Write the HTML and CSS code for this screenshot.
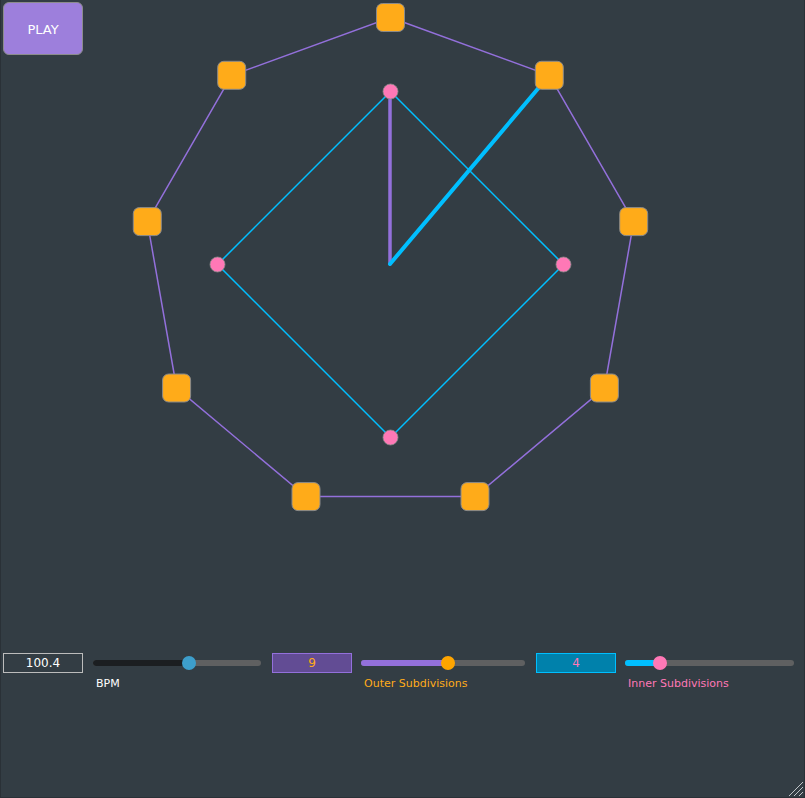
FILE: index.html
```html
<!DOCTYPE html>
<html>
<head>
<meta charset="utf-8">
<link rel="stylesheet" href="styles.css">
</head>
<body>
<div class="app">
  <div class="stage">
    <svg class="canvas" width="805" height="640" viewBox="0 0 805 640">
      <polygon class="outer" points="390.5,17.5 549.3,75.3 633.7,221.6 604.4,388 475,496.6 306,496.6 176.6,388 147.3,221.6 231.7,75.3"/>
      <polygon class="inner" points="390.5,91.5 563.5,264.5 390.5,437.5 217.5,264.5"/>
      <line class="hand-purple" x1="390" y1="264" x2="390" y2="91.5"/>
      <line class="hand-cyan" x1="390" y1="264" x2="549.3" y2="75.3"/>
      <g class="nodes">
        <rect x="376.5" y="3.5" width="28" height="28" rx="6"/>
        <rect x="535.3" y="61.3" width="28" height="28" rx="6"/>
        <rect x="619.7" y="207.6" width="28" height="28" rx="6"/>
        <rect x="590.4" y="374" width="28" height="28" rx="6"/>
        <rect x="461" y="482.6" width="28" height="28" rx="6"/>
        <rect x="292" y="482.6" width="28" height="28" rx="6"/>
        <rect x="162.6" y="374" width="28" height="28" rx="6"/>
        <rect x="133.3" y="207.6" width="28" height="28" rx="6"/>
        <rect x="217.7" y="61.3" width="28" height="28" rx="6"/>
      </g>
      <g class="dots">
        <circle cx="390.5" cy="91.5" r="7.5"/>
        <circle cx="563.5" cy="264.5" r="7.5"/>
        <circle cx="390.5" cy="437.5" r="7.5"/>
        <circle cx="217.5" cy="264.5" r="7.5"/>
      </g>
    </svg>
    <button class="play">PLAY</button>
  </div>
  <div class="controls">
    <div class="group g1">
      <div class="numbox bpm">100.4</div>
      <div class="slider">
        <div class="track"><div class="fill fill-bpm" style="width:57%"></div><div class="thumb thumb-bpm" style="left:57%"></div></div>
      </div>
      <div class="label label-bpm">BPM</div>
    </div>
    <div class="group g2">
      <div class="numbox outerbox">9</div>
      <div class="slider">
        <div class="track"><div class="fill fill-outer" style="width:53%"></div><div class="thumb thumb-outer" style="left:53%"></div></div>
      </div>
      <div class="label label-outer">Outer Subdivisions</div>
    </div>
    <div class="group g3">
      <div class="numbox innerbox">4</div>
      <div class="slider">
        <div class="track"><div class="fill fill-inner" style="width:21%"></div><div class="thumb thumb-inner" style="left:21%"></div></div>
      </div>
      <div class="label label-inner">Inner Subdivisions</div>
    </div>
  </div>
  <svg class="grip" width="18" height="18" viewBox="0 0 18 18">
    <line x1="17" y1="3" x2="3" y2="17"/>
    <line x1="17" y1="8" x2="8" y2="17"/>
    <line x1="17" y1="13" x2="13" y2="17"/>
  </svg>
</div>
</body>
</html>
```

FILE: styles.css
```css
html, body {
  margin: 0;
  padding: 0;
  background: #323c43;
}
.app {
  position: relative;
  width: 805px;
  height: 798px;
  box-sizing: border-box;
  border-left: 1px solid #2a3137;
  border-right: 1px solid #2a3137;
  border-bottom: 1px solid #2a3137;
  background: #333d44;
  font-family: "DejaVu Sans", Verdana, sans-serif;
  overflow: hidden;
}
.stage {
  position: relative;
  height: 640px;
  margin-left: -1px;
}
.canvas {
  display: block;
}
.outer {
  fill: none;
  stroke: #9370db;
  stroke-width: 1.5;
}
.inner {
  fill: none;
  stroke: #00bfff;
  stroke-width: 1.5;
}
.hand-purple {
  stroke: #9370db;
  stroke-width: 3.5;
  stroke-linecap: round;
}
.hand-cyan {
  stroke: #00bfff;
  stroke-width: 4;
  stroke-linecap: round;
}
.nodes rect {
  fill: #ffab19;
  stroke: #8a8a8a;
  stroke-width: 1;
}
.dots circle {
  fill: #ff78b6;
  stroke: #8a8a8a;
  stroke-width: 0.8;
}
.play {
  position: absolute;
  left: 3px;
  top: 2px;
  width: 80px;
  height: 53px;
  border: 1px solid #8c8c8c;
  border-radius: 6px;
  background: #9d7fdc;
  color: #ffffff;
  font-family: "DejaVu Sans", Verdana, sans-serif;
  font-size: 13px;
  padding: 2px 0 0 0;
}
.controls {
  display: flex;
  gap: 11px;
  padding: 13px 0 0 2px;
}
.group {
  display: grid;
  grid-template-columns: 80px auto;
  grid-template-rows: 20px auto;
  column-gap: 9px;
}
.g1 { column-gap: 10px; }
.g1 .slider { width: 168px; }
.g2 .slider { width: 164px; }
.g3 .slider { width: 169px; }
.numbox {
  box-sizing: border-box;
  height: 20px;
  width: 80px;
  border: 1px solid #c0c0c0;
  font-size: 12px;
  line-height: 18px;
  text-align: center;
}
.bpm {
  color: #ffffff;
  border-color: #bcbcbc;
}
.outerbox {
  background: #624c94;
  border-color: #9370db;
  color: #ffab19;
}
.innerbox {
  background: #0081ab;
  border-color: #00bfff;
  color: #ff78b6;
}
.slider {
  display: flex;
  align-items: center;
  height: 20px;
}
.track {
  position: relative;
  width: 100%;
  height: 6px;
  border-radius: 3px;
  background: #5f6061;
}
.fill {
  height: 100%;
  border-radius: 3px 0 0 3px;
}
.fill-bpm { background: #1b1e21; }
.fill-outer { background: #9370db; }
.fill-inner { background: #00bfff; }
.thumb {
  position: absolute;
  top: 50%;
  width: 14px;
  height: 14px;
  margin: -7px 0 0 -7px;
  border-radius: 50%;
}
.thumb-bpm { background: #3d9ecb; }
.thumb-outer { background: #ffa500; }
.thumb-inner { background: #ff78b6; }
.label {
  grid-column: 2;
  font-size: 11px;
  padding: 4px 0 0 3px;
}
.label-bpm { color: #ffffff; }
.label-outer { color: #ffab19; }
.label-inner { color: #ff78b6; }
.grip {
  position: absolute;
  right: 0;
  bottom: 0;
}
.grip line {
  stroke: #bfc4c8;
  stroke-width: 1;
}
```
